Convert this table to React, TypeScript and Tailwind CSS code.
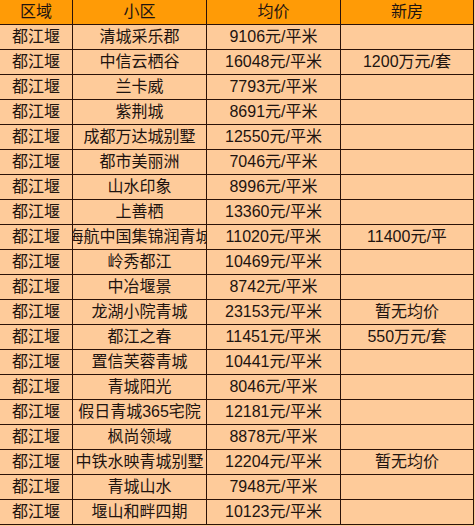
const rows: [string, string, string][] = [
  ['清城采乐郡', '9106元/平米', ''],
  ['中信云栖谷', '16048元/平米', '1200万元/套'],
  ['兰卡威', '7793元/平米', ''],
  ['紫荆城', '8691元/平米', ''],
  ['成都万达城别墅', '12550元/平米', ''],
  ['都市美丽洲', '7046元/平米', ''],
  ['山水印象', '8996元/平米', ''],
  ['上善栖', '13360元/平米', ''],
  ['海航中国集锦润青城', '11020元/平米', '11400元/平'],
  ['岭秀都江', '10469元/平米', ''],
  ['中冶堰景', '8742元/平米', ''],
  ['龙湖小院青城', '23153元/平米', '暂无均价'],
  ['都江之春', '11451元/平米', '550万元/套'],
  ['置信芙蓉青城', '10441元/平米', ''],
  ['青城阳光', '8046元/平米', ''],
  ['假日青城365宅院', '12181元/平米', ''],
  ['枫尚领域', '8878元/平米', ''],
  ['中铁水映青城别墅', '12204元/平米', '暂无均价'],
  ['青城山水', '7948元/平米', ''],
  ['堰山和畔四期', '10123元/平米', ''],
];

const cell =
  'flex items-center justify-center overflow-hidden whitespace-nowrap border-r border-b border-[#2b1208] h-[25px]';

export default function App() {
  return (
    <div
      className="w-[475px] h-[526px] bg-[#fecb9a] text-[#1e1410] text-[16px] leading-none overflow-hidden"
      style={{ fontFamily: '"Liberation Sans", "Noto Sans CJK SC", sans-serif' }}
    >
      <div className="grid grid-cols-[73px_134px_134px_133px] w-[474px]">
        {/* header */}
        <div className={`${cell} bg-[#ff9b06]`}>区域</div>
        <div className={`${cell} bg-[#ff9b06]`}>小区</div>
        <div className={`${cell} bg-[#ff9b06]`}>均价</div>
        <div className={`${cell} bg-[#ff9b06]`}>新房</div>

        {rows.map(([name, price, extra]) => (
          <div key={name} className="contents">
            <div className={cell}>都江堰</div>
            <div className={cell}>
              {/* long names overflow on both sides, as in the sheet */}
              <span className="shrink-0">{name}</span>
            </div>
            <div className={cell}>{price}</div>
            <div className={cell}>{extra}</div>
          </div>
        ))}
      </div>
    </div>
  );
}
